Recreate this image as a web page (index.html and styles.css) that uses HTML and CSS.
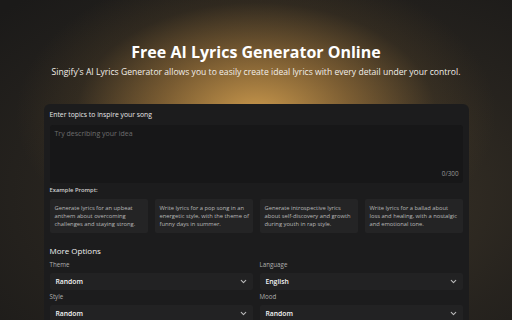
FILE: index.html
```html
<!DOCTYPE html>
<html>
<head>
<meta charset="utf-8">
<link rel="stylesheet" href="styles.css">
</head>
<body>
<div class="page">
  <header class="hero">
    <h1 class="title">Free AI Lyrics Generator Online</h1>
    <p class="subtitle">Singify's AI Lyrics Generator allows you to easily create ideal lyrics with every detail under your control.</p>
  </header>
  <main class="card">
    <div class="label">Enter topics to inspire your song</div>
    <div class="textarea">
      <div class="placeholder">Try describing your idea</div>
      <div class="counter">0/300</div>
    </div>
    <div class="small-label">Example Prompt:</div>
    <div class="prompts">
      <div class="prompt">Generate lyrics for an upbeat<br>anthem about overcoming<br>challenges and staying strong.</div>
      <div class="prompt">Write lyrics for a pop song in an<br>energetic style, with the theme of<br>funny days in summer.</div>
      <div class="prompt">Generate introspective lyrics<br>about self-discovery and growth<br>during youth in rap style.</div>
      <div class="prompt">Write lyrics for a ballad about<br>loss and healing, with a nostalgic<br>and emotional tone.</div>
    </div>
    <div class="section">More Options</div>
    <div class="options">
      <div class="field">
        <div class="field-label">Theme</div>
        <div class="select"><span>Random</span><svg class="chev" viewBox="0 0 10 10"><path d="M2.5 3.8 L5 6.2 L7.5 3.8" fill="none" stroke="#bbb" stroke-width="1.2" stroke-linecap="round" stroke-linejoin="round"/></svg></div>
      </div>
      <div class="field">
        <div class="field-label">Language</div>
        <div class="select"><span>English</span><svg class="chev" viewBox="0 0 10 10"><path d="M2.5 3.8 L5 6.2 L7.5 3.8" fill="none" stroke="#bbb" stroke-width="1.2" stroke-linecap="round" stroke-linejoin="round"/></svg></div>
      </div>
      <div class="field">
        <div class="field-label">Style</div>
        <div class="select"><span>Random</span><svg class="chev" viewBox="0 0 10 10"><path d="M2.5 3.8 L5 6.2 L7.5 3.8" fill="none" stroke="#bbb" stroke-width="1.2" stroke-linecap="round" stroke-linejoin="round"/></svg></div>
      </div>
      <div class="field">
        <div class="field-label">Mood</div>
        <div class="select"><span>Random</span><svg class="chev" viewBox="0 0 10 10"><path d="M2.5 3.8 L5 6.2 L7.5 3.8" fill="none" stroke="#bbb" stroke-width="1.2" stroke-linecap="round" stroke-linejoin="round"/></svg></div>
      </div>
    </div>
  </main>
</div>
</body>
</html>
```
FILE: styles.css
```css
html, body {
  margin: 0;
  padding: 0;
  width: 512px;
  height: 320px;
  overflow: hidden;
}
body {
  font-family: "Open Sans", "DejaVu Sans", sans-serif;
  color: #fff;
  background-color: #1b1a19;
  background-image:
    radial-gradient(ellipse 240px 150px at 256px 115px, rgba(210,158,78,0.95) 0%, rgba(175,128,62,0.6) 40%, rgba(90,70,40,0.25) 75%, rgba(40,35,30,0) 100%),
    radial-gradient(ellipse 420px 260px at 300px 195px, rgba(95,80,55,0.55) 0%, rgba(60,52,40,0.35) 60%, rgba(30,28,26,0) 100%);
}
.page {
  display: flex;
  flex-direction: column;
  align-items: center;
}
.hero {
  padding-top: 41px;
  text-align: center;
}
.title {
  margin: 0;
  font-size: 16px;
  line-height: 22px;
  font-weight: 700;
}
.subtitle {
  margin: 3px 0 0;
  font-size: 8.6px;
  line-height: 12px;
  font-weight: 500;
  color: #f2efe9;
}
.card {
  margin-top: 26px;
  width: 413px;
  height: 220px;
  padding: 5px 6px 0;
  background: #1c1c1d;
  border-radius: 6px;
  box-sizing: content-box;
}
.label {
  font-size: 6.8px;
  line-height: 11px;
  font-weight: 500;
  color: #e6e6e6;
}
.textarea {
  margin-top: 5px;
  height: 58px;
  background: #171718;
  border-radius: 3px;
  position: relative;
  box-sizing: border-box;
  padding: 4px 5px;
}
.placeholder {
  font-size: 7px;
  line-height: 10px;
  color: #6e6e6e;
}
.counter {
  position: absolute;
  right: 4px;
  bottom: 5px;
  font-size: 6.3px;
  line-height: 8px;
  color: #9a9a9a;
}
.small-label {
  margin-top: 2px;
  font-size: 5.8px;
  line-height: 10px;
  font-weight: 600;
  color: #cfcfcf;
}
.prompts {
  margin-top: 4px;
  display: grid;
  grid-template-columns: repeat(4, 1fr);
  gap: 7px;
}
.prompt {
  height: 34px;
  box-sizing: border-box;
  padding: 5px 1px 0 5px;
  background: #242425;
  border-radius: 2px;
  font-size: 5.8px;
  letter-spacing: -0.02px;
  line-height: 8px;
  color: #b9b9b9;
  white-space: nowrap;
}
.section {
  margin-top: 12px;
  font-size: 8px;
  line-height: 12px;
  font-weight: 500;
  color: #f0f0f0;
}
.options {
  margin-top: 3px;
  display: grid;
  grid-template-columns: 1fr 1fr;
  column-gap: 7px;
  row-gap: 2px;
}
.field-label {
  font-size: 6.2px;
  line-height: 10px;
  color: #b0b0b0;
}
.select {
  height: 17px;
  background: #222223;
  border-radius: 2px;
  display: flex;
  align-items: center;
  justify-content: space-between;
  padding: 0 5px 0 6px;
  font-size: 6.8px;
  font-weight: 600;
  color: #f5f5f5;
  margin-top: 3px;
}
.chev {
  width: 9px;
  height: 9px;
}
```
